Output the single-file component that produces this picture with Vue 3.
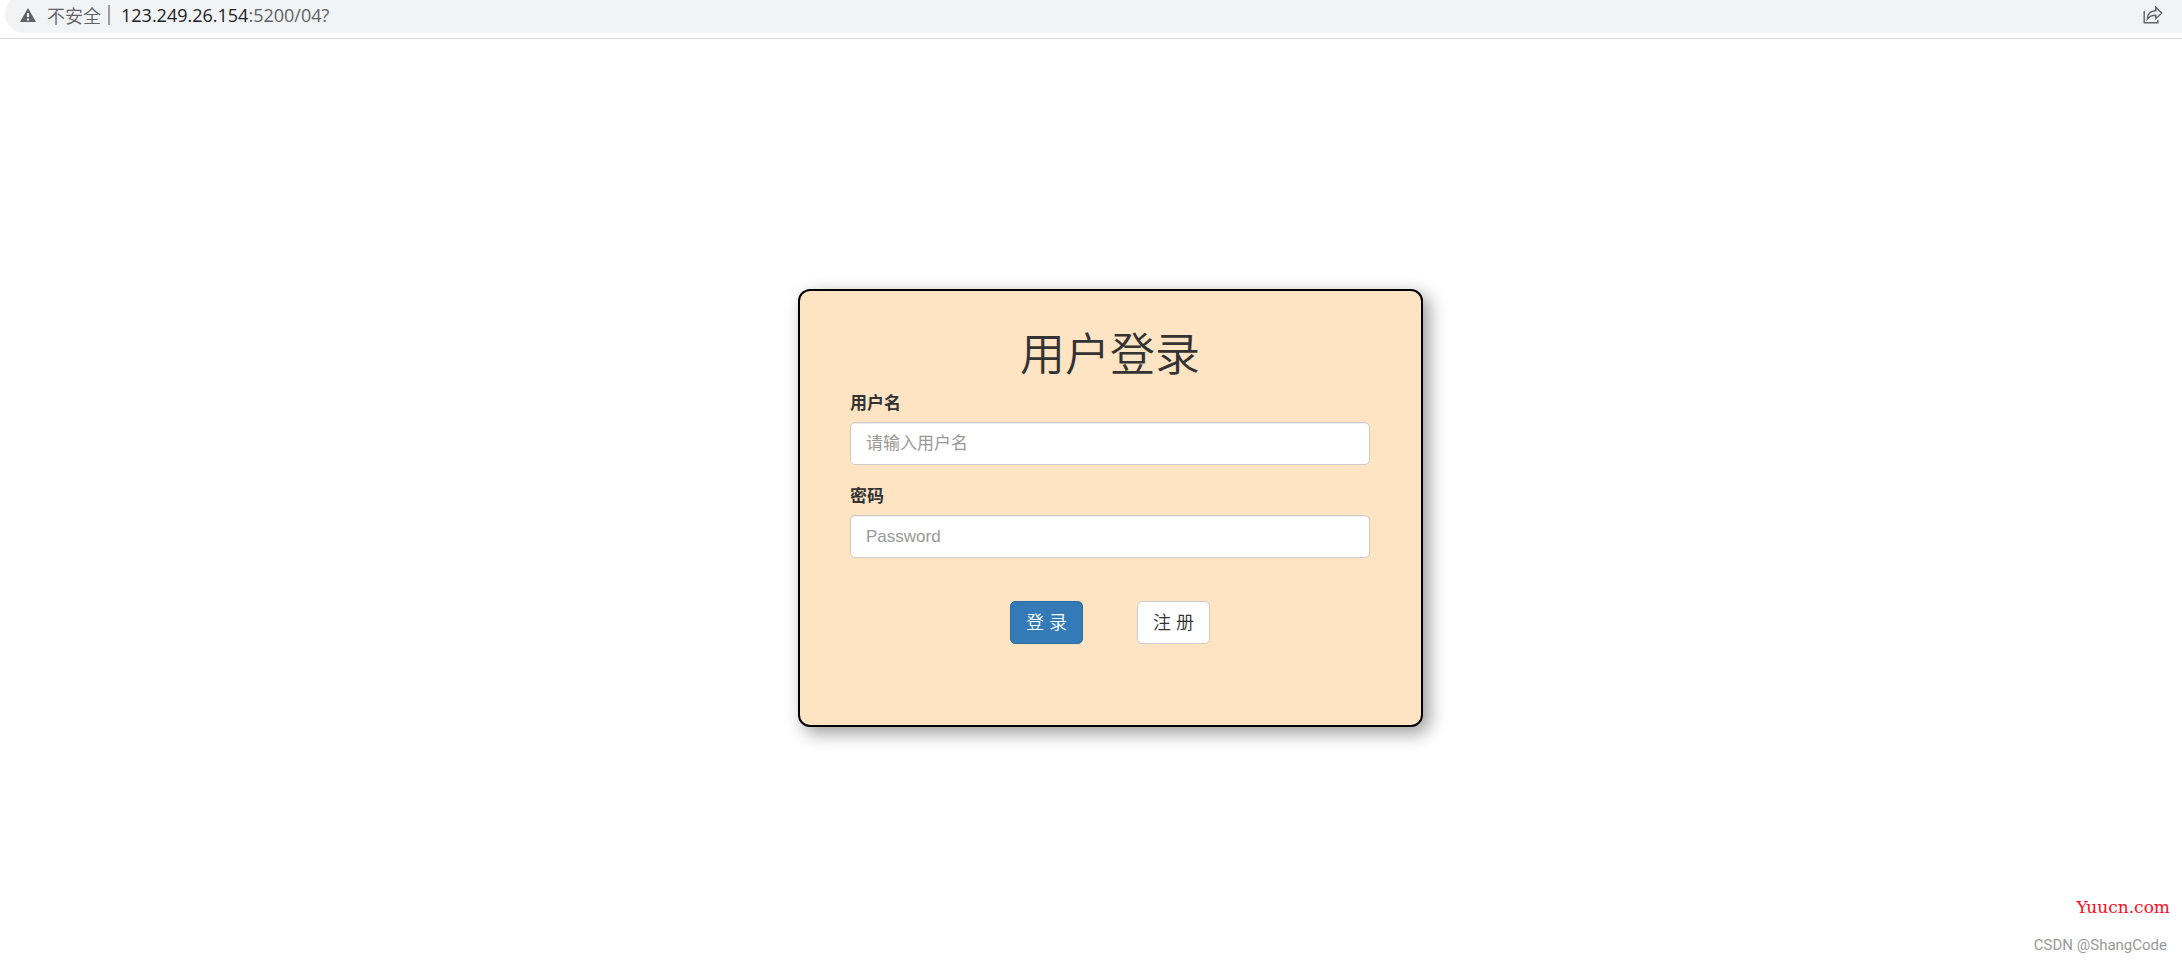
<script setup>
import { ref } from 'vue'

const username = ref('')
const password = ref('')
</script>

<template>
  <div class="page">
    <header class="toolbar">
      <div class="address">
        <svg class="warn" viewBox="0 0 16 14" aria-hidden="true">
          <path fill="#5f6368" fill-rule="evenodd" d="M8 0 16 14H0ZM7 5v4h2V5ZM7 10.5v2h2v-2Z" />
        </svg>
        <span class="insecure">不安全</span>
        <span class="divider"></span>
        <span class="url"><span class="host">123.249.26.154</span>:5200/04?</span>
        <button class="share" type="button" aria-label="分享">
          <svg viewBox="0 0 20 18" fill="none" stroke="#5f6368" stroke-width="1.4" aria-hidden="true">
            <path d="M1.2 5v11.8h13.6V14" />
            <path d="M4.3 13C4.5 8 7.5 5 12.8 4.8V1.2L18.7 7l-5.9 5.7V9.3C9 9.3 6.4 10.3 4.3 13Z" />
          </svg>
        </button>
      </div>
    </header>

    <main class="stage">
      <form class="card" @submit.prevent>
        <h1>用户登录</h1>
        <div class="field">
          <label for="username">用户名</label>
          <input id="username" v-model="username" type="text" placeholder="请输入用户名" />
        </div>
        <div class="field">
          <label for="password">密码</label>
          <input id="password" v-model="password" type="password" placeholder="Password" />
        </div>
        <div class="actions">
          <button class="btn primary" type="submit">登 录</button>
          <button class="btn" type="button">注 册</button>
        </div>
      </form>
    </main>

    <footer class="marks">
      <span class="site">Yuucn.com</span>
      <span class="author">CSDN @ShangCode</span>
    </footer>
  </div>
</template>

<style>
body {
  margin: 0;
  background: #fff;
}
</style>

<style scoped>
.page {
  display: flex;
  flex-direction: column;
  min-height: 100vh;
  overflow: hidden;
  font-family: "Liberation Sans", "Noto Sans CJK SC", sans-serif;
  font-size: 17px;
  color: #333;
}

.toolbar {
  padding: 0 0 5px 5px;
  border-bottom: 1px solid #d5d7d9;
}

.address {
  display: flex;
  align-items: center;
  box-sizing: border-box;
  height: 38px;
  margin-top: -5px;
  padding: 2px 19px 0 15px;
  border-radius: 19px 0 0 19px;
  background: #f1f3f4;
  color: #5f6368;
  font-family: "Open Sans", "Noto Sans CJK SC", sans-serif;
  font-size: 18px;
  line-height: 24px;
}

.warn {
  width: 16px;
  height: 14px;
  margin-right: 11px;
}

.insecure {
  font-family: "Noto Sans CJK SC", sans-serif;
  font-size: 18px;
  font-weight: 350;
}

.divider {
  width: 2px;
  height: 20px;
  margin: 0 11px 0 7px;
  background: #9aa0a6;
}

.host {
  color: #202124;
}

.share {
  width: 20px;
  height: 18px;
  margin-left: auto;
  padding: 0;
  border: 0;
  background: none;
}

.share svg {
  display: block;
  width: 20px;
  height: 18px;
}

.stage {
  display: flex;
  flex: 1;
  justify-content: center;
  align-items: flex-start;
  padding: 250px 0 40px 39px;
}

.card {
  box-sizing: border-box;
  width: 625px;
  max-width: 100%;
  padding: 40px 51px 81px 50px;
  border: 2px solid #000;
  border-radius: 12px;
  background: bisque;
  box-shadow: 6px 6px 18px rgba(0, 0, 0, 0.4);
}

h1 {
  margin: 0 0 10px;
  font-size: 45px;
  font-weight: 350;
  line-height: 50px;
  text-align: center;
}

.field {
  margin-bottom: 19px;
}

label {
  display: block;
  margin-bottom: 6px;
  font-weight: 700;
  line-height: 25px;
}

input {
  display: block;
  box-sizing: border-box;
  width: 100%;
  height: 43px;
  padding: 7px 15px;
  border: 1px solid #ccc;
  border-radius: 5px;
  background: #fff;
  box-shadow: inset 0 1px 1px rgba(0, 0, 0, 0.075);
  color: #555;
  font: inherit;
}

input::placeholder {
  color: #999;
  opacity: 1;
}

.actions {
  display: flex;
  justify-content: center;
  gap: 54px;
  padding-top: 24px;
}

.btn {
  box-sizing: border-box;
  width: 73px;
  height: 43px;
  padding: 0 0 4px;
  border: 1px solid #ccc;
  border-radius: 5px;
  background: #fff;
  color: #333;
  font: inherit;
  font-size: 18px;
  font-weight: 350;
}

.btn.primary {
  border-color: #2e6da4;
  background: #337ab7;
  color: #fff;
}

.marks {
  display: flex;
  flex-direction: column;
  align-items: flex-end;
  gap: 18px;
  padding: 0 12px 7px;
}

.site {
  color: #fe0b24;
  font-family: "DejaVu Serif", serif;
  font-size: 17px;
  line-height: 20px;
}

.author {
  margin-right: 3px;
  color: #999;
  font-family: Roboto, sans-serif;
  font-size: 15px;
  line-height: 20px;
}
</style>
